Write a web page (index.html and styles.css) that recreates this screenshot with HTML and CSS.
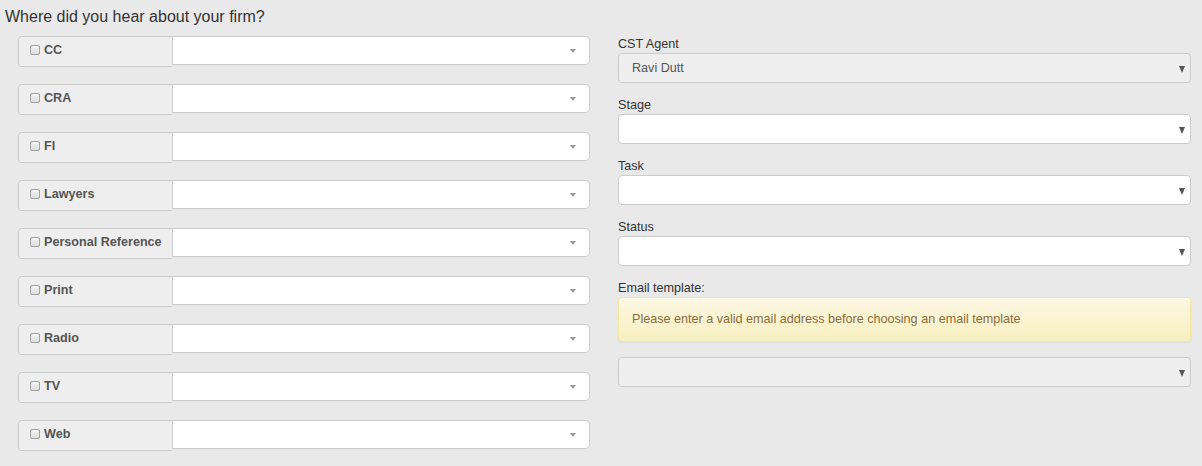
FILE: index.html
```html
<!DOCTYPE html>
<html lang="en">

<head>
    <meta charset="UTF-8">
    <meta name="viewport" content="width=device-width, initial-scale=1.0">
    <title>Lead source</title>
    <link rel="stylesheet" href="styles.css">
</head>

<body>
    <h3 class="page_title">Where did you hear about your firm?</h3>

    <div class="form_cols">
        <div class="sources">
            <div class="source_row">
                <label class="source_addon"><input type="checkbox" class="source_check"> CC</label>
                <div class="source_select"><span class="source_arrow"></span></div>
            </div>
            <div class="source_row">
                <label class="source_addon"><input type="checkbox" class="source_check"> CRA</label>
                <div class="source_select"><span class="source_arrow"></span></div>
            </div>
            <div class="source_row">
                <label class="source_addon"><input type="checkbox" class="source_check"> FI</label>
                <div class="source_select"><span class="source_arrow"></span></div>
            </div>
            <div class="source_row">
                <label class="source_addon"><input type="checkbox" class="source_check"> Lawyers</label>
                <div class="source_select"><span class="source_arrow"></span></div>
            </div>
            <div class="source_row">
                <label class="source_addon"><input type="checkbox" class="source_check"> Personal Reference</label>
                <div class="source_select"><span class="source_arrow"></span></div>
            </div>
            <div class="source_row">
                <label class="source_addon"><input type="checkbox" class="source_check"> Print</label>
                <div class="source_select"><span class="source_arrow"></span></div>
            </div>
            <div class="source_row">
                <label class="source_addon"><input type="checkbox" class="source_check"> Radio</label>
                <div class="source_select"><span class="source_arrow"></span></div>
            </div>
            <div class="source_row">
                <label class="source_addon"><input type="checkbox" class="source_check"> TV</label>
                <div class="source_select"><span class="source_arrow"></span></div>
            </div>
            <div class="source_row">
                <label class="source_addon"><input type="checkbox" class="source_check"> Web</label>
                <div class="source_select"><span class="source_arrow"></span></div>
            </div>
        </div>

        <div class="details">
            <div class="field">
                <div class="field_label">CST Agent</div>
                <div class="field_select disabled">Ravi Dutt</div>
            </div>
            <div class="field">
                <div class="field_label">Stage</div>
                <div class="field_select"></div>
            </div>
            <div class="field">
                <div class="field_label">Task</div>
                <div class="field_select"></div>
            </div>
            <div class="field">
                <div class="field_label">Status</div>
                <div class="field_select"></div>
            </div>
            <div class="field">
                <div class="field_label">Email template:</div>
                <div class="alert_warning">Please enter a valid email address before choosing an email template</div>
                <div class="field_select disabled"></div>
            </div>
        </div>
    </div>
</body>

</html>
```

FILE: styles.css
```css
* {
    box-sizing: border-box;
}

body {
    margin: 0;
    padding: 7px 5px 0;
    font-family: "Liberation Sans", Arial, sans-serif;
    font-size: 12.6px;
    color: #333;
    background-color: #e9e9e9;
}

.page_title {
    margin: 0 0 9px;
    font-size: 16px;
    font-weight: normal;
    line-height: 20px;
    color: #333;
}

.form_cols {
    display: flex;
    gap: 28px;
}

.sources {
    width: 585px;
    padding-left: 13px;
}

.source_row {
    display: flex;
    align-items: flex-start;
    margin-bottom: 17px;
}

.source_addon {
    display: flex;
    align-items: flex-start;
    width: 154px;
    height: 31px;
    padding: 5px 0 0 11px;
    border: 1px solid #ccc;
    border-right: 0;
    border-radius: 4px 0 0 4px;
    background-color: #eee;
    font-weight: bold;
    line-height: 17px;
    color: #555;
    white-space: nowrap;
}

.source_check {
    appearance: none;
    width: 10px;
    height: 10px;
    margin: 3px 4px 0 0;
    border: 1px solid #a3a3a3;
    border-radius: 2px;
    background: linear-gradient(#f4f4f4, #dedede);
}

.source_select {
    position: relative;
    flex: 1;
    height: 29px;
    border: 1px solid #ccc;
    border-radius: 0 4px 4px 0;
    background-color: #fff;
}

.source_arrow {
    position: absolute;
    right: 13px;
    top: 12px;
    border-left: 3.5px solid transparent;
    border-right: 3.5px solid transparent;
    border-top: 4px solid #999;
}

.details {
    width: 573px;
}

.field {
    margin-bottom: 14px;
}

.field_label {
    line-height: 17px;
    color: #333;
}

.field_select {
    position: relative;
    height: 30px;
    padding-left: 13px;
    border: 1px solid #ccc;
    border-radius: 4px;
    background-color: #fff;
    line-height: 28px;
    color: #555;
}

.field_select::after {
    content: "";
    position: absolute;
    right: 5px;
    top: 12px;
    border-left: 3.5px solid transparent;
    border-right: 3.5px solid transparent;
    border-top: 7px solid #555;
}

.field_select.disabled {
    background-color: #eee;
}

.alert_warning {
    height: 45px;
    margin-bottom: 15px;
    padding-left: 13px;
    border: 1px solid #f5e79e;
    border-radius: 4px;
    background: linear-gradient(#fcf8e3, #f8efc0);
    box-shadow: inset 0 1px 0 rgba(255, 255, 255, .25), 0 1px 2px rgba(0, 0, 0, .05);
    line-height: 43px;
    color: #8a6d3b;
}
```
